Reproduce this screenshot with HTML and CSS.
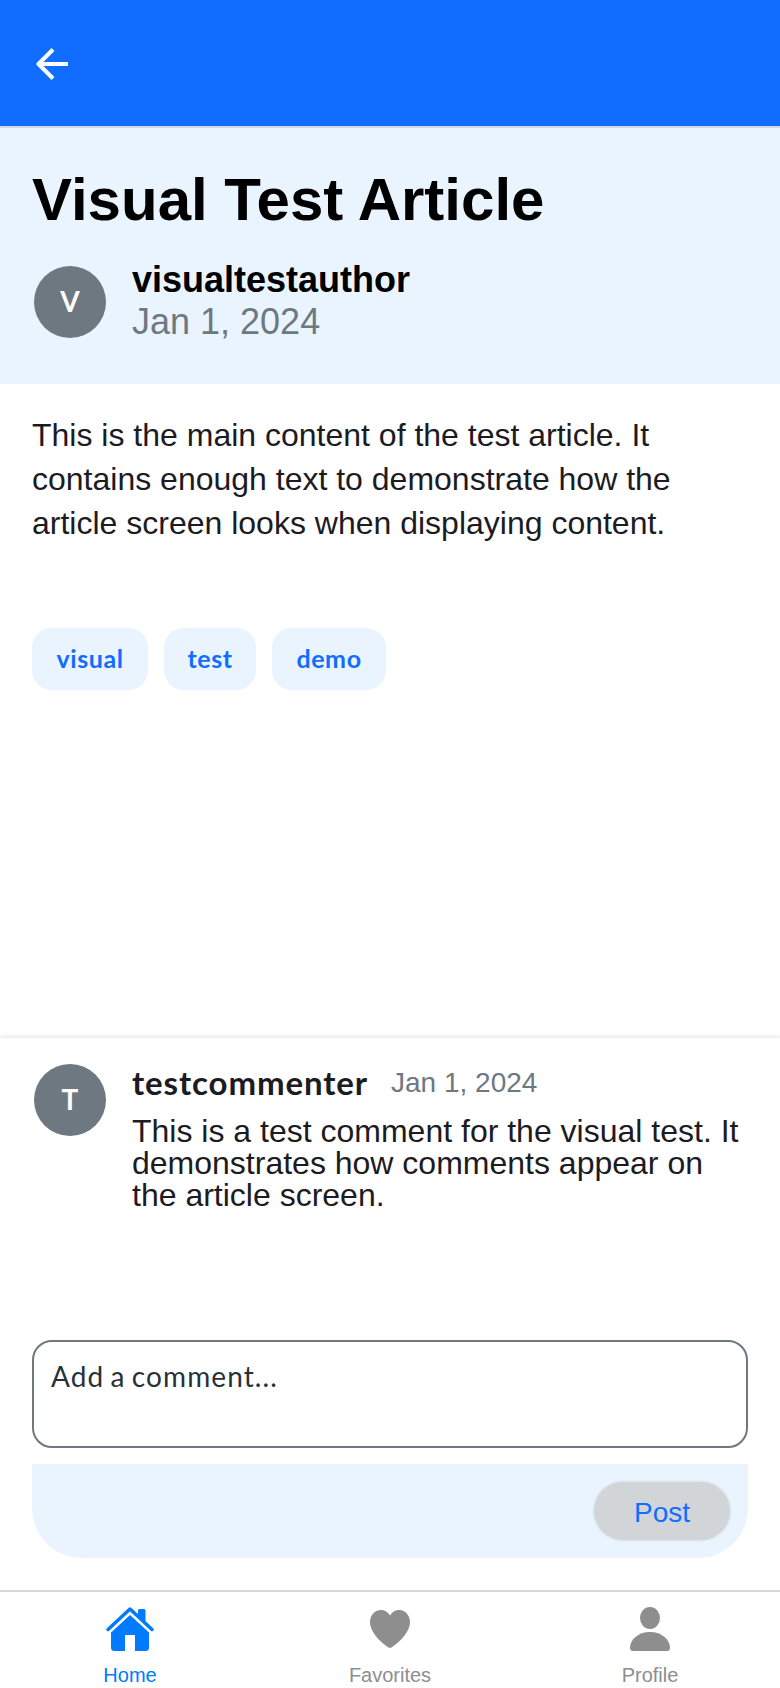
FILE: index.html
```html
<!DOCTYPE html>
<html lang="en">
<head>
<meta charset="utf-8">
<title>Visual Test Article</title>
<link rel="stylesheet" href="styles.css">
</head>
<body>
<div class="screen">
  <header class="topbar">
    <svg class="back" viewBox="0 0 32 32"><path d="M32 16H3M17 1.500L2.500 16L17 30.500" fill="none" stroke="#fff" stroke-width="4" stroke-linejoin="round"/></svg>
  </header>
  <section class="banner">
    <h1 class="title">Visual Test Article</h1>
    <div class="author">
      <div class="avatar"><span>V</span></div>
      <div class="author-text">
        <div class="author-name">visualtestauthor</div>
        <div class="author-date">Jan 1, 2024</div>
      </div>
    </div>
  </section>
  <main class="article">
    <p class="body">This is the main content of the test article. It contains enough text to demonstrate how the article screen looks when displaying content.</p>
    <div class="tags">
      <span class="tag tag-visual">visual</span>
      <span class="tag tag-test">test</span>
      <span class="tag tag-demo">demo</span>
    </div>
  </main>
  <section class="comments">
    <div class="comment">
      <div class="avatar"><span>T</span></div>
      <div class="comment-main">
        <div class="comment-head"><span class="commenter">testcommenter</span><span class="comment-date">Jan 1, 2024</span></div>
        <p class="comment-text">This is a test comment for the visual test. It demonstrates how comments appear on the article screen.</p>
      </div>
    </div>
    <div class="field"><span>Add a comment...</span></div>
    <div class="actions"><button class="post">Post</button></div>
  </section>
  <nav class="tabs">
    <a class="tab active">
      <svg class="icon" viewBox="0 0 50 48"><path d="M3 25.500L25 5L47 25.500" fill="none" stroke="currentColor" stroke-width="3.500" stroke-linecap="round" stroke-linejoin="round"/><path d="M33 6.500Q33 5 34.500 5H39Q40.500 5 40.500 6.500V18L33 11ZM25 11L44 28.500V43.500Q44 47 40.500 47H30V31H20V47H9.500Q6 47 6 43.500V28.500Z" fill="currentColor"/></svg>
      <span>Home</span>
    </a>
    <a class="tab">
      <svg class="icon" viewBox="0 0 50 48"><path d="M25 44C23 44 5 31 5 18C5 11 10 6 15.500 6C20 6 23 8 25 11.500C27 8 30 6 34.500 6C40 6 45 11 45 18C45 31 27 44 25 44Z" fill="currentColor"/></svg>
      <span>Favorites</span>
    </a>
    <a class="tab">
      <svg class="icon" viewBox="0 0 50 48"><ellipse cx="25" cy="14" rx="10" ry="11" fill="currentColor"/><path d="M8 47Q5 47 5 43.500C5 36 13 28 25 28C37 28 45 36 45 43.500Q45 47 42 47Z" fill="currentColor"/></svg>
      <span>Profile</span>
    </a>
  </nav>
</div>
</body>
</html>
```
FILE: styles.css
```css
* { box-sizing: border-box; }
body { margin: 0; background: #fff; color: #1c1b1f; font-family: "Liberation Sans", Arial, sans-serif; }
h1, p { margin: 0; }
.screen { width: 780px; height: 1688px; display: flex; flex-direction: column; overflow: hidden; }
.topbar { height: 128px; flex: none; background: #116dff; border-bottom: 2px solid #d0d9e6; padding: 48px 36px; }
.back { display: block; width: 32px; height: 32px; }
.banner { height: 256px; flex: none; background: #e9f4ff; padding: 36px 32px 0; }
.title { color: #000; font-size: 60px; line-height: 72px; font-weight: 700; }
.author { display: flex; gap: 26px; padding: 23px 2px 0; }
.avatar { width: 72px; height: 72px; flex: none; margin-top: 7px; border-radius: 50%; background: #6e7881; color: #fff; display: flex; align-items: center; justify-content: center; padding-bottom: 3px; font: 700 28px Lato, sans-serif; }
.author-text { font-size: 36px; line-height: 42px; }
.author-name { color: #000; font-weight: 700; }
.author-date { color: #6e7881; }
.article { height: 654px; flex: none; padding: 29px 32px 0; }
.body { font-size: 32px; line-height: 44px; }
.tags { display: flex; gap: 16px; margin-top: 83px; }
.tag { height: 62px; border-radius: 20px; background: #e9f4ff; color: #116dff; display: flex; align-items: center; justify-content: center; padding-bottom: 2px; font: 700 25px Lato, sans-serif; letter-spacing: .6px; }
.tag-visual { width: 116px; }
.tag-test { width: 92px; }
.tag-demo { width: 114px; }
.comments { height: 552px; flex: none; background: #fff; padding: 26px 32px 0; box-shadow: 0 -1px 5px rgba(0,0,0,.12); }
.comment { height: 276px; display: flex; gap: 26px; padding-left: 2px; }
.comment .avatar { margin-top: 0; }
.comment-main { flex: 1; }
.comment-head { display: flex; gap: 24px; height: 51px; }
.commenter { width: 235px; font: 700 33px/37px Lato, sans-serif; letter-spacing: .9px; white-space: nowrap; }
.comment-date { font-size: 28px; line-height: 38px; color: #6e7881; }
.comment-text { font-size: 32px; line-height: 32px; }
.field { height: 108px; border: 2px solid #6e7881; border-radius: 20px; padding: 14px 17px; color: #263238; font: 28px/40px Lato, sans-serif; letter-spacing: 1.1px; word-spacing: -2px; }
.actions { height: 94px; margin-top: 16px; background: #e9f4ff; border-radius: 0 0 50px 50px; padding: 18px; display: flex; justify-content: flex-end; }
.post { width: 136px; height: 58px; border: 0; border-radius: 29px; background: #d1d5d8; color: #116dff; font: 28px "Liberation Sans", Arial, sans-serif; padding: 4px 0 0; box-shadow: 0 0 3px rgba(0,0,0,.15); }
.tabs { position: relative; height: 98px; flex: none; background: #fff; border-top: 2px solid #d8d8d8; display: flex; }
.tab { flex: 1; display: flex; flex-direction: column; align-items: center; color: #8e8e8f; font-size: 20px; line-height: 24px; padding-top: 12px; gap: 11px; }
.tab.active { color: #007aff; }
.icon { width: 50px; height: 48px; display: block; }
```
